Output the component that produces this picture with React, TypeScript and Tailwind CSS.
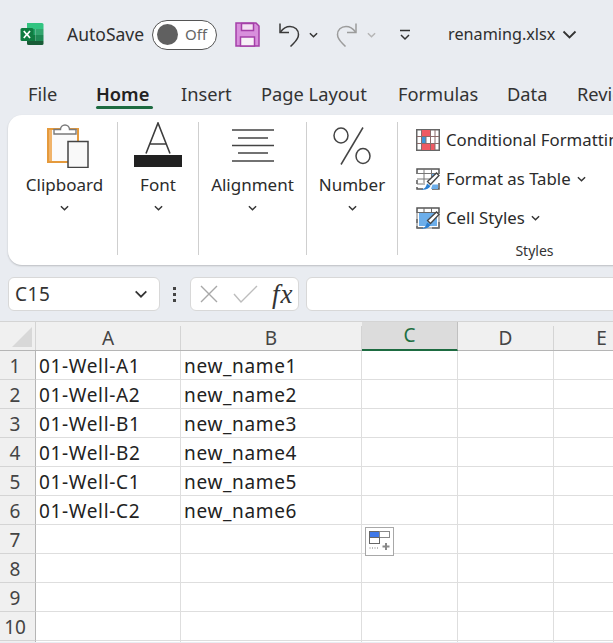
import React from "react";

const Chev = ({ w = 10, h = 6, c = "#333", sw = 1.6 }: { w?: number; h?: number; c?: string; sw?: number }) => (
  <svg width={w} height={h} viewBox="0 0 10 6" fill="none" className="shrink-0">
    <path d="M1 1l4 4 4-4" stroke={c} strokeWidth={sw} />
  </svg>
);

const ExcelLogo = () => (
  <svg width="25" height="25" viewBox="0 0 25 25" className="shrink-0">
    <path d="M7 1h15a1.500 1.500 0 0 1 1.500 1.500V7H7z" fill="#33c481" />
    <path d="M7 7h8.500v6H7z" fill="#21a366" />
    <path d="M15.500 7h8v6h-8z" fill="#33a56e" />
    <path d="M7 13h8.500v6H7z" fill="#107c41" />
    <path d="M15.500 13h8v6h-8z" fill="#1f8a55" />
    <path d="M7 19h16.500v2.500A1.500 1.500 0 0 1 22 23H8.500A1.500 1.500 0 0 1 7 21.500z" fill="#185c37" />
    <rect x="0.500" y="6" width="13" height="13" rx="1.500" fill="#107c41" />
    <path d="M3.800 9l2.900 3.500-2.900 3.500M10 9l-2.900 3.500 2.900 3.500" stroke="#fff" strokeWidth="1.700" fill="none" />
  </svg>
);

const SaveIcon = () => (
  <svg width="25" height="25" viewBox="0 0 25 25" className="shrink-0">
    <path d="M1 1h20l3 3v20H1z" fill="#d88fdc" stroke="#a43fa8" strokeWidth="1.500" />
    <path d="M6.500 1.500h12v7h-12z" fill="#f3dff3" stroke="#a43fa8" strokeWidth="1.500" />
    <path d="M5.500 15h14v9h-14z" fill="#f7f0f7" stroke="#a43fa8" strokeWidth="1.500" />
  </svg>
);

const Undo = ({ c, flip }: { c: string; flip?: boolean }) => (
  <svg width="24" height="25" viewBox="0 0 24 25" fill="none" className="shrink-0" style={flip ? { transform: "scaleX(-1)" } : undefined}>
    <path d="M3 1.500v9h9" stroke={c} strokeWidth="1.500" />
    <path d="M3.500 10C6 6.500 9 4.500 13 4.500c5 0 8.500 3.500 8.500 8 0 3.500-2 6-5 9l-3 3" stroke={c} strokeWidth="1.500" />
  </svg>
);

const Clipboard = () => (
  <svg width="42" height="46" viewBox="0 0 42 46" fill="none">
    <rect x="1" y="7" width="30" height="33" fill="#fbfbfb" stroke="#e59a3c" strokeWidth="2" />
    <path d="M2 8v31h3V8z" fill="#f0b36a" />
    <path d="M7 12V7.500h6.500a4.500 4.500 0 0 1 9 0H29V12z" fill="#fff" stroke="#7a7a7a" strokeWidth="1.400" />
    <rect x="21" y="19.500" width="20" height="26" fill="#f9f9f9" stroke="#444" strokeWidth="1.500" />
  </svg>
);

const FontIcon = () => (
  <svg width="48" height="46" viewBox="0 0 48 46" fill="none">
    <path d="M12 31.500L24 1l12 30.500M15.500 22h17" stroke="#3d3d3d" strokeWidth="1.600" />
    <rect x="0" y="33" width="48" height="12" fill="#212121" />
  </svg>
);

const AlignIcon = () => (
  <svg width="42" height="33" viewBox="0 0 42 33" fill="none" stroke="#444" strokeWidth="1.400">
    <path d="M0 1h42M6 9h30M0 16.500h42M6 24h30M0 32h42" />
  </svg>
);

const PercentIcon = () => (
  <svg width="38" height="38" viewBox="0 0 38 38" fill="none" stroke="#444" strokeWidth="1.500">
    <ellipse cx="8" cy="8.500" rx="7" ry="7.500" />
    <ellipse cx="30" cy="29" rx="7" ry="7.500" />
    <path d="M30 0.500L8 37.500" />
  </svg>
);

const CondIcon = () => (
  <svg width="24" height="22" viewBox="0 0 24 22" fill="none" className="shrink-0">
    <rect x="0.750" y="0.750" width="22.500" height="20.500" fill="#fff" stroke="#666" strokeWidth="1.500" />
    <rect x="5" y="1" width="9.500" height="6.500" fill="#ef5a63" />
    <rect x="5" y="14.500" width="14" height="6.500" fill="#ef5a63" />
    <rect x="5" y="7.500" width="5" height="7" fill="#3f97d8" />
    <path d="M5.500 1v20M14.500 1v20M19 1v20M1 7.500h22M1 14.500h22M10 7.500v7" stroke="#8a6a6a" strokeWidth="1" />
  </svg>
);

const BrushIcon = ({ full }: { full?: boolean }) => (
  <svg width="24" height="22" viewBox="0 0 24 22" fill="none" className="shrink-0">
    <path d="M1 6V1h22v5M1 12v4M1 19v2h6M23 15v6h-7" stroke="#555" strokeWidth="1.500" />
    {full ? (
      <>
        <path d="M1 6v15h22V6" stroke="#777" strokeWidth="1" />
        <rect x="3" y="6" width="18" height="13" fill="#6caeea" />
        <path d="M1 5.500h22M8 1v4.500M15.500 1v4.500" stroke="#666" strokeWidth="1" />
      </>
    ) : (
      <>
        <path d="M1 5.500h22M1 11h15M8 1v14M15.500 1v14M1 16h8" stroke="#777" strokeWidth="1" />
        <path d="M16 6h5.500v4l-5.500 5zM16.500 16.500H22V21h-7z" fill="#6caeea" />
      </>
    )}
    <path d="M11.500 13.500L20.500 5l2.500 2.500-8.500 9z" fill="#fff" stroke="#444" strokeWidth="1.300" />
    <path d="M4 21.500c3.500 0 6-1.500 7-6l3.500 2.500c-1.500 3-5.500 4.500-10.500 3.500z" fill="#2b7fd1" />
  </svg>
);

const Group = ({ label, children, w, iconH = "h-[46px]", pad = "" }: { label: string; children: React.ReactNode; w: string; iconH?: string; pad?: string }) => (
  <div className={`${w} ${pad} flex shrink-0 flex-col items-center border-r border-[#cfcfcf] h-[133px]`}>
    <div className={`flex ${iconH} items-end justify-center`}>{children}</div>
    <div className="mt-[5px] text-[17px] leading-[24px] text-[#2b2b2b]">{label}</div>
    <div className="mt-[8px]"><Chev w={9} h={6} c="#333" /></div>
  </div>
);

const StyleRow = ({ icon, label, chev }: { icon: React.ReactNode; label: string; chev?: boolean }) => (
  <div className="flex h-[39px] items-center whitespace-nowrap">
    {icon}
    <span className="ml-[6px] text-[16.800px] text-[#2b2b2b]">{label}</span>
    {chev && <span className="ml-[6px]"><Chev w={9} h={6} c="#333" /></span>}
  </div>
);

const rowNums = [1, 2, 3, 4, 5, 6, 7, 8, 9, 10, 11];
const colA = ["01-Well-A1", "01-Well-A2", "01-Well-B1", "01-Well-B2", "01-Well-C1", "01-Well-C2"];
const colB = ["new_name1", "new_name2", "new_name3", "new_name4", "new_name5", "new_name6"];

const ColHead = ({ l, w, active }: { l: string; w: string; active?: boolean }) => (
  <div
    className={`${w} shrink-0 flex items-center justify-center text-[19px] border-r ${
      active
        ? "bg-[#dcdcdc] text-[#1d6f42] border-[#c0c0c0] border-b-2 border-b-[#1d6b41] h-[29px]"
        : "text-[#444] border-[#d4d4d4] h-[24px] mt-[4px]"
    }`}
  >
    {l}
  </div>
);

export default function App() {
  return (
    <div className="relative h-[643px] w-[613px] overflow-hidden bg-[#e9ecf1] font-['Noto_Sans','Open_Sans',sans-serif]">
      {/* Title bar */}
      <div className="flex h-[69px] items-center pl-[20px] whitespace-nowrap">
        <ExcelLogo />
        <span className="ml-[22px] text-[17.500px] text-[#2f2f2f]">AutoSave</span>
        <div className="ml-[8px] flex h-[30px] w-[65px] shrink-0 items-center rounded-full border border-[#555] bg-white pl-[4px]">
          <div className="h-[21px] w-[21px] rounded-full bg-[#606060]" />
          <span className="ml-[7px] text-[15px] text-[#666]">Off</span>
        </div>
        <span className="ml-[18px]"><SaveIcon /></span>
        <span className="ml-[17px]"><Undo c="#3a3a3a" /></span>
        <span className="ml-[8px]"><Chev w={9} h={6} c="#333" /></span>
        <span className="ml-[17px]"><Undo c="#9c9c9c" flip /></span>
        <span className="ml-[8px]"><Chev w={9} h={6} c="#b5b5b5" /></span>
        <span className="ml-[23px]">
          <svg width="12" height="12" viewBox="0 0 12 12" fill="none" stroke="#333" strokeWidth="1.500">
            <path d="M1 1.500h10M2 6l4 4 4-4" />
          </svg>
        </span>
        <span className="ml-[37px] text-[16.200px] text-[#2f2f2f]">renaming.xlsx</span>
        <span className="ml-[7px]"><Chev w={15} h={9} c="#333" sw={1.200} /></span>
      </div>

      {/* Tabs */}
      <div className="flex h-[41px] items-start overflow-hidden pl-[28px] pt-[12px] text-[18.300px] leading-[26px] text-[#333] whitespace-nowrap">
        <span className="w-[68px] shrink-0">File</span>
        <span className="w-[85px] shrink-0">
          <span className="relative inline-block font-semibold text-[#222]">
            Home
            <span className="absolute left-0 right-[-4px] top-[25px] h-[2.500px] rounded-full bg-[#1d6b41]" />
          </span>
        </span>
        <span className="w-[80px] shrink-0">Insert</span>
        <span className="w-[137px] shrink-0">Page Layout</span>
        <span className="w-[109px] shrink-0">Formulas</span>
        <span className="w-[70px] shrink-0">Data</span>
        <span className="shrink-0">Review</span>
      </div>

      {/* Ribbon */}
      <div className="ml-[8px] mt-[5px] flex h-[150px] w-[640px] rounded-l-[14px] bg-white pt-[7px] shadow-[0_1px_2px_rgba(0,0,0,0.2)]">
        <Group label="Clipboard" w="w-[110px]" pad="pl-[4px]"><span className="ml-[6px] flex"><Clipboard /></span></Group>
        <Group label="Font" w="w-[81px]"><FontIcon /></Group>
        <Group label="Alignment" w="w-[108px]" iconH="h-[40px] mb-[6px]"><AlignIcon /></Group>
        <Group label="Number" w="w-[91px]" iconH="h-[43px] mb-[3px]"><PercentIcon /></Group>
        <div className="-mt-[2px] flex w-[250px] flex-col pl-[18px]">
          <StyleRow icon={<CondIcon />} label="Conditional Formatting" />
          <StyleRow icon={<BrushIcon />} label="Format as Table" chev />
          <StyleRow icon={<BrushIcon full />} label="Cell Styles" chev />
          <div className="mt-[3px] w-[237px] text-center text-[14px] text-[#333]">Styles</div>
        </div>
      </div>

      {/* Formula bar */}
      <div className="mt-[12px] flex h-[34px] items-center pl-[8px]">
        <div className="flex h-[34px] w-[152px] shrink-0 items-center justify-between rounded-[6px] border border-[#d8d8d8] bg-white pl-[6px] pr-[11px] text-[19px] tracking-[0.5px] text-[#333]">
          <span>C15</span>
          <Chev w={14} h={8} c="#333" sw={1.300} />
        </div>
        <div className="ml-[13px] flex shrink-0 flex-col gap-[3px]">
          <div className="h-[3px] w-[3px] bg-[#444]" />
          <div className="h-[3px] w-[3px] bg-[#444]" />
          <div className="h-[3px] w-[3px] bg-[#444]" />
        </div>
        <div className="ml-[14px] flex h-[34px] w-[109px] shrink-0 items-center rounded-[6px] border border-[#d8d8d8] bg-white pl-[9px]">
          <svg width="18" height="18" viewBox="0 0 18 18" stroke="#a8a8a8" strokeWidth="1.400" fill="none" className="shrink-0"><path d="M1 1l16 16M17 1L1 17" /></svg>
          <svg className="ml-[15px] shrink-0" width="25" height="18" viewBox="0 0 25 18" stroke="#bdbdbd" strokeWidth="1.400" fill="none"><path d="M1 9l7 8L24 1" /></svg>
          <span className="ml-[14px] font-['Liberation_Serif',serif] text-[27px] italic leading-none tracking-[1px] text-[#333]">fx</span>
        </div>
        <div className="ml-[7px] h-[34px] w-[320px] shrink-0 rounded-[6px] border border-[#d8d8d8] bg-white" />
      </div>

      {/* Grid */}
      <div className="mt-[10px] h-[321px] overflow-hidden border-t border-[#d4d4d4] bg-white">
        <div className="flex h-[29px] items-start border-b border-[#b5b5b5] bg-[#f0f0f0]">
          <div className="relative h-[28px] w-[36px] shrink-0 border-r border-[#d4d4d4]">
            <svg className="absolute bottom-[3px] right-[3px]" width="20" height="20" viewBox="0 0 20 20"><path d="M20 0v20H0z" fill="#d8d8d8" /></svg>
          </div>
          <ColHead l="A" w="w-[145px]" />
          <ColHead l="B" w="w-[181px]" />
          <ColHead l="C" w="w-[96px]" active />
          <ColHead l="D" w="w-[96px]" />
          <ColHead l="E" w="w-[96px]" />
        </div>
        {rowNums.map((n, i) => (
          <div key={n} className="flex h-[29px]">
            <div className="flex w-[36px] shrink-0 items-center justify-center border-r border-b border-r-[#b5b5b5] border-b-[#d4d4d4] bg-[#f0f0f0] pr-[5px] pt-[2px] text-[19px] text-[#444]">
              {n < 11 ? n : ""}
            </div>
            {[145, 181, 96, 96, 96].map((w, c) => (
              <div
                key={c}
                style={{ width: w }}
                className="flex shrink-0 items-center overflow-hidden whitespace-nowrap border-r border-b border-[#dedede] pl-[3px] pt-[2px] text-[19px] tracking-[0.65px] text-[#222]"
              >
                {c === 0 ? colA[i] : c === 1 ? colB[i] : ""}
              </div>
            ))}
          </div>
        ))}
      </div>

      {/* Paste options */}
      <div className="absolute left-[365px] top-[527px] flex h-[29px] w-[29px] items-center justify-center border border-[#a8a8a8] bg-white">
        <svg width="22" height="22" viewBox="0 0 22 22" fill="none">
          <rect x="0.500" y="0.500" width="10" height="6" fill="#3f78e8" stroke="#666" />
          <rect x="10.500" y="0.500" width="10" height="6" fill="#fff" stroke="#888" />
          <rect x="0.500" y="6.500" width="10" height="6" fill="#fff" stroke="#666" />
          <path d="M0.500 17h10" stroke="#777" strokeDasharray="1 1.500" />
          <path d="M17 12v7M13.500 15.500h7" stroke="#888" strokeWidth="2" />
        </svg>
      </div>
    </div>
  );
}
